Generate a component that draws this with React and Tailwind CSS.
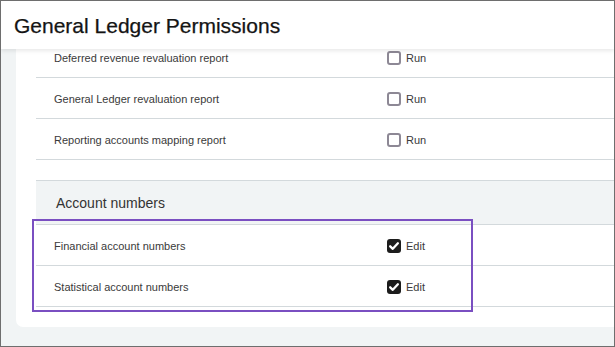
const REPORTS = [
  'Deferred revenue revaluation report',
  'General Ledger revaluation report',
  'Reporting accounts mapping report',
]

const ACCOUNT_NUMBERS = ['Financial account numbers', 'Statistical account numbers']

function Checkbox({ checked }) {
  if (checked) {
    return (
      <span className="flex h-[14px] w-[14px] items-center justify-center rounded-[3px] bg-[#1c1c1c]">
        <svg viewBox="0 0 14 14" className="h-[14px] w-[14px]">
          <path d="M3.2 7.3 L5.8 9.8 L10.9 4.3" fill="none" stroke="#fff" strokeWidth="2.3" strokeLinecap="round" strokeLinejoin="round" />
        </svg>
      </span>
    )
  }
  return <span className="h-[14px] w-[14px] rounded-[3px] border-2 border-[#8d8895] bg-white" />
}

function PermissionRow({ label, action, checked }) {
  return (
    <div className="flex h-[41px] items-center border-b border-[#d3d9dc] pt-[2px]">
      <div className="w-[351px] pl-[18px] text-[11px] text-[#3a3a3a]">{label}</div>
      <label className="flex items-center gap-[5px] text-[11px] text-[#3a3a3a]">
        <Checkbox checked={checked} />
        <span>{action}</span>
      </label>
    </div>
  )
}

export default function App() {
  return (
    <div
      className="flex h-[347px] w-[615px] flex-col overflow-hidden border border-[#6e6e6e] bg-[#f1f4f5]"
      style={{ fontFamily: '"Liberation Sans", Arial, sans-serif' }}
    >
      {/* Page header, sits over the scrolled content */}
      <header className="relative z-10 flex h-[48px] shrink-0 items-center bg-white px-[13px] shadow-[0_2px_4px_rgba(0,0,0,0.09)]">
        <h1 className="pt-[1px] text-[21px] leading-[24px] text-[#141414] [-webkit-text-stroke:0.25px_#141414]">
          General Ledger Permissions
        </h1>
      </header>

      <div className="flex flex-1 flex-col overflow-hidden pb-[19px] pl-[15px]">
        <div className="-mt-[12px] flex flex-1 flex-col rounded-bl-[7px] bg-white pl-[20px]">
          {REPORTS.map((r) => (
            <PermissionRow key={r} label={r} action="Run" checked={false} />
          ))}

          <div className="mt-[20px] flex h-[45px] items-center border-y border-[#d3d9dc] bg-[#f1f4f5] pl-[20px] pt-[1px] text-[14px] text-[#333]">
            Account numbers
          </div>

          <div className="relative">
            {ACCOUNT_NUMBERS.map((r) => (
              <PermissionRow key={r} label={r} action="Edit" checked />
            ))}
            {/* highlight box */}
            <div className="pointer-events-none absolute -bottom-[5px] -left-[4px] -top-[6px] w-[441px] border-2 border-[#7a4fc1]" />
          </div>
        </div>
      </div>
    </div>
  )
}
